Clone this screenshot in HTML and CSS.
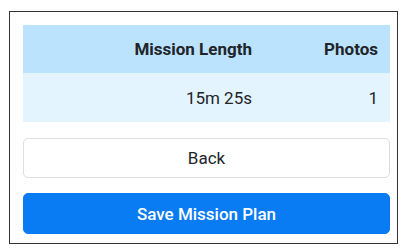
FILE: index.html
```html
<!DOCTYPE html>
<html>
<head>
<meta charset="utf-8">
<link rel="stylesheet" href="styles.css">
</head>
<body>
<div class="frame">
  <div class="summary">
    <div class="cell head">Mission Length</div>
    <div class="cell head">Photos</div>
    <div class="cell body">15m 25s</div>
    <div class="cell body">1</div>
  </div>
  <button class="btn btn-back">Back</button>
  <button class="btn btn-save">Save Mission Plan</button>
</div>
</body>
</html>
```

FILE: styles.css
```css
html, body {
  margin: 0;
  padding: 0;
  background: #fff;
}
body {
  font-family: Roboto, "Liberation Sans", sans-serif;
  color: #212529;
}
.frame {
  box-sizing: border-box;
  width: 389px;
  height: 233px;
  margin: 11px 0 0 9px;
  border: 1px solid #333;
  padding: 13px 7px 9px 13px;
  display: flex;
  flex-direction: column;
}
.summary {
  display: grid;
  grid-template-columns: 241px 126px;
  grid-template-rows: 48px 49px;
}
.cell {
  display: flex;
  align-items: center;
  justify-content: flex-end;
  padding-right: 12px;
  font-size: 17px;
}
.head {
  background: #bbe3fd;
  font-weight: 700;
}
.body {
  background: #e4f4fe;
}
.btn {
  box-sizing: border-box;
  width: 100%;
  font-family: Roboto, "Liberation Sans", sans-serif;
  font-size: 17px;
  border-radius: 5px;
  cursor: pointer;
}
.btn-back {
  margin-top: 16px;
  height: 40px;
  background: #fff;
  border: 1px solid #dedede;
  color: #212529;
}
.btn-save {
  margin-top: 15px;
  height: 41px;
  background: #0a7cf3;
  border: 1px solid #0a7cf3;
  color: #fff;
  font-weight: 500;
}
```
